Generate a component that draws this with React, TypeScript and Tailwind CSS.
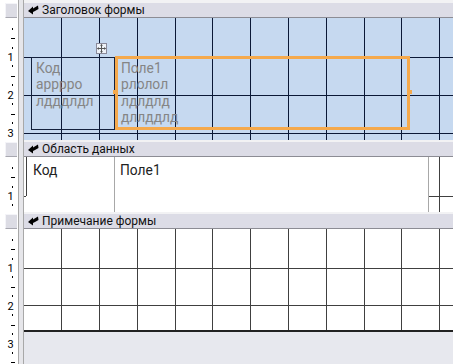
import React from "react";

const CM = 37.795;
const XS = Array.from({ length: 11 }, (_, i) => Math.floor(24 + CM * (i + 1)) - 24);

function Grid({ h, color, ys }: { h: number; color: string; ys: number[] }) {
  return (
    <svg className="absolute left-0 top-0" width={429} height={h}>
      {XS.map((x) => (
        <line key={"x" + x} x1={x + 0.5} x2={x + 0.5} y1={0} y2={h} stroke={color} strokeWidth={1} />
      ))}
      {ys.map((y) => (
        <line key={"y" + y} x1={0} x2={429} y1={y + 0.5} y2={y + 0.5} stroke={color} strokeWidth={1} />
      ))}
    </svg>
  );
}

function Ruler({ h }: { h: number }) {
  const marks: React.ReactNode[] = [];
  const origin = 1.2;
  for (let i = 1; i < 40; i++) {
    const y = origin + (CM * i) / 4;
    if (y > h - 1) break;
    const yr = Math.round(y);
    if (i % 4 === 0) {
      marks.push(
        <text key={i} x={10.5} y={yr + 4} fontSize={11} textAnchor="middle" fill="#000" fontFamily="Roboto, sans-serif">
          {i / 4}
        </text>
      );
    } else if (i % 4 === 2) {
      marks.push(<rect key={i} x={11} y={yr} width={4} height={1} fill="#000" />);
    } else {
      marks.push(<rect key={i} x={12} y={yr - 1} width={1} height={2} fill="#000" />);
    }
  }
  return (
    <svg width={18} height={h} className="block">
      {marks}
    </svg>
  );
}

function SectionIcon() {
  return (
    <svg width="11" height="10" viewBox="0 0 11 10" className="shrink-0">
      <path d="M0 6 L5 1.5 L5 3.5 L10 0.5 L10.5 4 L7 6 L5 7 L5 9.5 Z" fill="#000" />
    </svg>
  );
}

function Bar({ label, first }: { label: string; first?: boolean }) {
  const pad = first ? "pt-[3px]" : "pt-[2px]";
  return (
    <div className="flex">
      <div className={`w-[18px] bg-white flex flex-col ${pad}`}>
        <div className="ml-[5px] w-[12px] h-[15px] bg-[#dcdce4] border-l border-t border-[#f4f4f8] border-b border-b-[#a8a8b0]" />
      </div>
      <div className="w-[6px] border-l border-r border-[#a8a8a8] bg-[#e6e6ea]" />
      <div className={`flex-1 bg-[#f2f2f4] ${pad}`}>
        <div className="h-[14px] bg-[#dcdce6] flex items-center pl-[4px] gap-[3px]">
          <SectionIcon />
          <span className="text-[12px] leading-[14px] text-[#111] font-['Roboto',sans-serif]">{label}</span>
        </div>
        <div className="h-[1px] bg-[#8c8c94]" />
      </div>
    </div>
  );
}

function Row({ h, children }: { h: number; children: React.ReactNode }) {
  return (
    <div className="flex" style={{ height: h }}>
      <div className="w-[18px] bg-white">
        <Ruler h={h} />
      </div>
      <div className="w-[6px] border-l border-r border-[#a8a8a8] bg-[#e6e6ea]" />
      <div className="relative flex-1 overflow-hidden">{children}</div>
    </div>
  );
}

function MoveIcon() {
  return (
    <svg width="9" height="9" viewBox="0 0 9 9">
      <path d="M4.5 0.5 L4.5 8.5 M0.5 4.5 L8.5 4.5" stroke="#555" strokeWidth="1" />
      <path d="M4.5 0 L3 1.8 L6 1.8 Z M4.5 9 L3 7.2 L6 7.2 Z M0 4.5 L1.8 3 L1.8 6 Z M9 4.5 L7.2 3 L7.2 6 Z" fill="#555" />
    </svg>
  );
}

const fieldText = "text-[13.8px] leading-[16.33px] font-['Roboto',sans-serif]";

export default function App() {
  return (
    <div className="w-[453px] h-[364px] overflow-hidden bg-[#e7e8ee] select-none">
      <Bar label="Заголовок формы" first />
      <Row h={122}>
        <div className="absolute inset-0 bg-[#c6d9f0]" />
        <Grid h={122} color="#0b1836" ys={[39, 77, 115]} />
        <div className="relative flex items-start pl-[7px] pt-[38px]">
          <div className={`mt-[1px] w-[84px] h-[73px] border border-[#14213d] pl-[4px] pt-[2px] text-[#858585] ${fieldText}`}>
            <div>Код</div>
            <div>арррро</div>
            <div>лдддлдл</div>
          </div>
          <div className={`relative w-[295px] h-[74px] border-[3px] border-[#f5a94c] pl-[3px] pt-[1px] text-[#858585] ${fieldText}`}>
            <div>Поле1</div>
            <div>рлолол</div>
            <div>лдлдлд</div>
            <div>дллддлд</div>
            <div className="absolute -left-[5px] top-[31px] w-[4px] h-[4px] bg-[#f5a94c]" />
            <div className="absolute -right-[5px] top-[31px] w-[4px] h-[4px] bg-[#f5a94c]" />
          </div>
          <div className="absolute left-[72px] top-[25px] w-[11px] h-[11px] bg-[#eef2f8] border border-[#8a8a9a] flex items-center justify-center">
            <MoveIcon />
          </div>
        </div>
      </Row>
      <Bar label="Область данных" />
      <Row h={55}>
        <div className="absolute inset-0 bg-white" />
        <Grid h={55} color="#404040" ys={[39]} />
        <div className={`relative flex h-full text-[#222] ${fieldText}`}>
          <div className="w-[90px] h-full pl-[2px]">
            <div className="h-full bg-white border-l border-l-[#404040] [border-image:linear-gradient(to_bottom,#404040_39px,transparent_39px)_1] pl-[6px] pt-[5px]">
              Код
            </div>
          </div>
          <div className="w-[315px] h-full bg-white border-l border-r border-[#a8a8a8] pl-[5px] pt-[5px]">Поле1</div>
        </div>
      </Row>
      <Bar label="Примечание формы" />
      <Row h={135}>
        <div className="relative h-[101px] bg-white">
          <Grid h={101} color="#404040" ys={[39, 76]} />
        </div>
        <div className="h-[2px] bg-[#222]" />
      </Row>
    </div>
  );
}
